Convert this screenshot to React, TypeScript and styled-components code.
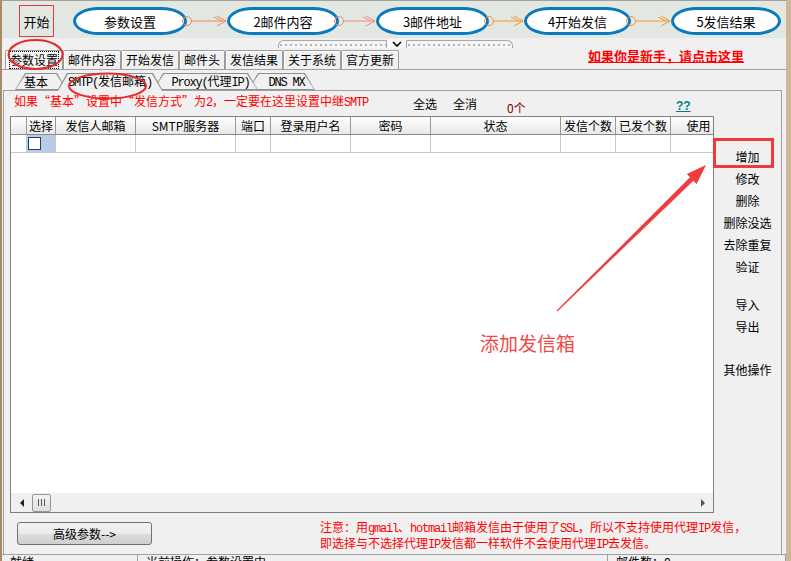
import React from "react";
import styled, { createGlobalStyle } from "styled-components";

const cjk = `"Noto Sans CJK SC", "Noto Sans", sans-serif`;

const GlobalStyle = createGlobalStyle`
  html, body { margin: 0; padding: 0; }
  body {
    background: #cdb796;
    font-family: ${cjk};
    font-size: 12px;
    color: #000;
    overflow: hidden;
  }
`;

const Window = styled.div`
  position: relative;
  width: 784px;
  height: 575px;
  border-left: 2px solid #a88a68;
  background: #f0f0f0;
  display: flex;
  flex-direction: column;
  overflow: hidden;
  font-family: ${cjk};
  font-size: 12px;
`;

/* ---------- flow strip ---------- */
const FlowStrip = styled.div`
  height: 37px;
  flex-shrink: 0;
  border-top: 1px solid #a0a0a0;
  background: #e2e7e2;
  display: flex;
  align-items: flex-start;
  padding-left: 17px;
`;

const StartBox = styled.div`
  margin-top: 4px;
  width: 35px;
  height: 32px;
  box-sizing: border-box;
  border: 1px solid #e23c3c;
  display: flex;
  align-items: center;
  justify-content: center;
  font-size: 13px;
  margin-right: 19px;
`;

const Step = styled.div<{ $w: number }>`
  margin-top: 6px;
  width: ${(p) => p.$w}px;
  height: 28px;
  box-sizing: border-box;
  border: 3px solid #0a79be;
  border-radius: 26px / 14px;
  background: #fff;
  display: flex;
  align-items: center;
  justify-content: center;
  font-size: 13px;
`;

const ConnectorBox = styled.div<{ $w: number }>`
  position: relative;
  z-index: 1;
  margin-top: 6px;
  width: ${(p) => p.$w}px;
  height: 28px;
  svg { display: block; overflow: visible; }
`;

const Connector = ({ w, color }: { w: number; color: string }) => (
  <ConnectorBox $w={w}>
    <svg width={w} height={28}>
      <circle cx={0} cy={14} r={4.5} fill="none" stroke={color} strokeWidth={1} />
      <line x1={4.5} y1={14} x2={w - 1} y2={14} stroke={color} strokeWidth={1} />
      <polyline points={`${w - 10},9 ${w - 1},14 ${w - 10},19`} fill="none" stroke={color} strokeWidth={1} />
      <polyline points={`${w - 13},10 ${w - 5},14`} fill="none" stroke={color} strokeWidth={1} />
    </svg>
  </ConnectorBox>
);

/* ---------- splitter ---------- */
const SplitterRow = styled.div`
  height: 10px;
  flex-shrink: 0;
  display: flex;
  align-items: flex-end;
  padding-left: 276px;
`;

const GripHalf = styled.div<{ $w: number; $side: "l" | "r" }>`
  width: ${(p) => p.$w}px;
  height: 8px;
  box-sizing: border-box;
  border: 1px solid #a8a8a8;
  border-bottom: none;
  border-radius: ${(p) => (p.$side === "l" ? "6px 1px 0 0" : "1px 6px 0 0")};
  background-color: #f6f6f6;
  background-image: linear-gradient(90deg, #b4b4b4 0 2px, transparent 2px);
  background-size: 5px 2px;
  background-repeat: repeat-x;
  background-position: 6px 3px;
`;

const GripToggle = styled.div`
  width: 19px;
  height: 9px;
  display: flex;
  align-items: center;
  justify-content: center;
  background: #f8f8f8;
`;

/* ---------- main tabs ---------- */
const MainTabsRow = styled.div`
  height: 21px;
  flex-shrink: 0;
  display: flex;
  align-items: flex-end;
  padding-left: 3px;
  border-bottom: 1px solid #a0a0a0;
`;

const MainTab = styled.div<{ $active?: boolean }>`
  height: 19px;
  box-sizing: border-box;
  padding: 0 4px;
  border: 1px solid #9c9c9c;
  border-bottom: none;
  border-radius: 2px 2px 0 0;
  background: ${(p) => (p.$active ? "#f7f7f7" : "#f0f0f0")};
  box-shadow: inset 1px 1px 0 #ffffff;
  display: flex;
  align-items: center;
  line-height: 16px;
  white-space: nowrap;
  span {
    outline: ${(p) => (p.$active ? "1px dotted #000" : "none")};
  }
`;

const NewbieLink = styled.a`
  margin-left: auto;
  margin-right: 42px;
  align-self: flex-start;
  margin-top: 1px;
  color: #ff0000;
  font-weight: bold;
  font-size: 13px;
  line-height: 14px;
  text-decoration: underline;
`;

/* ---------- page ---------- */
const MainPage = styled.div`
  flex: 1;
  display: flex;
  flex-direction: column;
  padding: 0 4px 0 1px;
  min-height: 0;
`;

const SubTabsRow = styled.div`
  height: 20px;
  flex-shrink: 0;
  display: flex;
  align-items: flex-end;
  padding-left: 12px;
  box-sizing: border-box;
`;

const SubTab = styled.div<{ $w: number; $z: number; $active?: boolean; $side: "l" | "r" | "c" }>`
  position: relative;
  z-index: ${(p) => p.$z};
  width: ${(p) => p.$w}px;
  height: ${(p) => (p.$active ? 18 : 17)}px;
  margin-bottom: ${(p) => (p.$active ? -1 : 0)}px;
  margin-left: -10px;
  &:first-child { margin-left: 0; }
  box-sizing: border-box;
  padding: ${(p) => (p.$side === "l" ? "0 10px 0 0" : p.$side === "r" ? "0 0 0 10px" : "0")};
  display: flex;
  align-items: center;
  justify-content: center;
  white-space: nowrap;
  line-height: 14px;
  &::before,
  &::after {
    content: "";
    position: absolute;
    clip-path: polygon(0 100%, 10px 0, calc(100% - 10px) 0, 100% 100%);
  }
  &::before { inset: 0; background: #8e8e8e; }
  &::after { inset: 1px 1px ${(p) => (p.$active ? 0 : 1)}px 1px; background: #f0f0f0; }
  & > span { position: relative; z-index: 1; padding-bottom: ${(p) => (p.$active ? 1 : 0)}px; }
`;

const Mono = styled.span`
  font-family: "Liberation Mono", monospace;
  font-size: 12px;
  letter-spacing: -1.2px;
`;

const SubPanel = styled.div`
  flex: 1;
  box-sizing: border-box;
  border: 1px solid #a0a0a0;
  display: flex;
  flex-direction: column;
  padding-left: 6px;
`;

const InfoRow = styled.div`
  height: 25px;
  flex-shrink: 0;
  display: flex;
  align-items: flex-start;
  line-height: 14px;
  white-space: nowrap;
`;

const InfoItem = styled.div<{ $w?: number; $top: number; $color?: string; $indent?: number }>`
  width: ${(p) => (p.$w ? `${p.$w}px` : "auto")};
  box-sizing: border-box;
  padding-left: ${(p) => p.$indent || 0}px;
  margin-top: ${(p) => p.$top}px;
  color: ${(p) => p.$color || "#000"};
`;

const HelpLink = styled.a`
  margin-top: 8px;
  color: #008080;
  font-family: "Liberation Sans", sans-serif;
  font-weight: bold;
  font-size: 12px;
  text-decoration: underline;
`;

const GridArea = styled.div`
  height: 397px;
  flex-shrink: 0;
  display: flex;
`;

const cols = "16px 29px 80px 100px 35px 80px 80px 130px 55px 55px 56px";

const Grid = styled.div`
  width: 704px;
  height: 397px;
  box-sizing: border-box;
  border: 1px solid #7f7f7f;
  background: #fff;
  display: flex;
  flex-direction: column;
  overflow: hidden;
`;

const HeaderRow = styled.div`
  display: grid;
  grid-template-columns: ${cols};
  height: 18px;
  flex-shrink: 0;
  box-sizing: border-box;
  border-bottom: 1px solid #8a8a8a;
  background: linear-gradient(#ffffff, #f3f3f3 50%, #e8e8e8);
`;

const HeadCell = styled.div`
  border-right: 1px solid #9a9a9a;
  display: flex;
  align-items: center;
  justify-content: center;
  line-height: 16px;
  white-space: nowrap;
  overflow: hidden;
`;

const DataRow = styled.div`
  display: grid;
  grid-template-columns: ${cols};
  height: 18px;
  flex-shrink: 0;
  box-sizing: border-box;
  border-bottom: 1px solid #c8c8c8;
`;

const DataCell = styled.div<{ $selected?: boolean }>`
  border-right: 1px solid #c8c8c8;
  background: ${(p) => (p.$selected ? "#b8cbe7" : "#fff")};
  display: flex;
  align-items: center;
  padding-left: 1px;
`;

const Check = styled.div`
  width: 13px;
  height: 13px;
  box-sizing: border-box;
  border: 1px solid #1e3f6f;
  background: #fff;
`;

const GridBody = styled.div`
  flex: 1;
  background: #fff;
`;

const HScroll = styled.div`
  height: 19px;
  flex-shrink: 0;
  display: flex;
  align-items: center;
  background: #f0f0f0;
`;

const ScrollArrow = styled.div<{ $dir: "l" | "r" }>`
  width: 21px;
  height: 19px;
  display: flex;
  align-items: center;
  justify-content: center;
  &::before {
    content: "";
    border-top: 4px solid transparent;
    border-bottom: 4px solid transparent;
    ${(p) => (p.$dir === "l" ? "border-right: 4px solid #222;" : "border-left: 4px solid #555;")}
  }
`;

const Thumb = styled.div`
  width: 19px;
  height: 18px;
  box-sizing: border-box;
  border: 1px solid #979797;
  border-radius: 2px;
  background: linear-gradient(#f4f4f4, #dedede);
  display: flex;
  align-items: center;
  justify-content: center;
  gap: 2px;
  span {
    width: 1px;
    height: 7px;
    background: #555;
  }
`;

const ScrollTrack = styled.div`
  flex: 1;
`;

const SideButtons = styled.div`
  width: 67px;
  display: flex;
  flex-direction: column;
  padding-top: 29px;
`;

const SideButton = styled.div`
  height: 22px;
  display: flex;
  align-items: center;
  justify-content: center;
  white-space: nowrap;
`;

const Gap = styled.div<{ $h: number }>`
  height: ${(p) => p.$h}px;
`;

const BottomRow = styled.div`
  height: 41px;
  flex-shrink: 0;
  display: flex;
  align-items: flex-start;
`;

const AdvButton = styled.button`
  margin: 9px 0 0 7px;
  width: 135px;
  height: 23px;
  box-sizing: border-box;
  border: 1px solid #707070;
  border-radius: 3px;
  background: linear-gradient(#f2f2f2, #ebebeb 50%, #dddddd 51%, #cfcfcf);
  font-family: ${cjk};
  font-size: 12px;
  color: #000;
  padding: 0;
`;

const Notice = styled.div`
  margin: 7px 0 0 168px;
  color: #ff0000;
  line-height: 13px;
  white-space: nowrap;
`;

/* ---------- status bar ---------- */
const StatusBar = styled.div`
  height: 20px;
  flex-shrink: 0;
  border-top: 1px solid #a0a0a0;
  display: flex;
  line-height: 14px;
`;

const StatusPanel = styled.div<{ $w?: number }>`
  width: ${(p) => (p.$w ? `${p.$w}px` : "auto")};
  flex: ${(p) => (p.$w ? "none" : "1")};
  border-right: 1px solid #a0a0a0;
  padding-left: 8px;
  box-sizing: border-box;
  white-space: nowrap;
`;

/* ---------- annotations ---------- */
const Overlay = styled.div`
  position: absolute;
  top: 0;
  left: -2px;
  width: 791px;
  height: 561px;
  pointer-events: none;
  z-index: 20;
  svg { position: absolute; inset: 0; }
`;

const CalloutText = styled.div`
  position: absolute;
  left: 480px;
  top: 332px;
  font-size: 19px;
  line-height: 22px;
  color: #f24848;
  white-space: nowrap;
`;

const steps = [
  { label: "参数设置", w: 114 },
  { label: "2邮件内容", w: 112 },
  { label: "3邮件地址", w: 113 },
  { label: "4开始发信", w: 107 },
  { label: "5发信结果", w: 110 },
];
const links = [
  { w: 40, color: "#f08a5a" },
  { w: 37, color: "#f28a8a" },
  { w: 35, color: "#f39a2a" },
  { w: 40, color: "#f39a2a" },
];

const mainTabs = ["参数设置", "邮件内容", "开始发信", "邮件头", "发信结果", "关于系统", "官方更新"];
const headers = ["", "选择", "发信人邮箱", "SMTP服务器", "端口", "登录用户名", "密码", "状态", "发信个数", "已发个数", "使用"];

export default function App() {
  return (
    <>
      <GlobalStyle />
      <Window lang="zh-CN">
        <FlowStrip>
          <StartBox>开始</StartBox>
          {steps.map((s, i) => (
            <React.Fragment key={s.label}>
              <Step $w={s.w}>{s.label}</Step>
              {links[i] && <Connector w={links[i].w} color={links[i].color} />}
            </React.Fragment>
          ))}
        </FlowStrip>

        <SplitterRow>
          <GripHalf $w={109} $side="l" />
          <GripToggle>
            <svg width="10" height="6" viewBox="0 0 10 6">
              <polyline points="1,1 5,5 9,1" fill="none" stroke="#000" strokeWidth="1.6" />
            </svg>
          </GripToggle>
          <GripHalf $w={107} $side="r" />
        </SplitterRow>

        <MainTabsRow>
          {mainTabs.map((t, i) => (
            <MainTab key={t} $active={i === 0}>
              <span>{t}</span>
            </MainTab>
          ))}
          <NewbieLink>如果你是新手，请点击这里</NewbieLink>
        </MainTabsRow>

        <MainPage>
          <SubTabsRow>
            <SubTab $w={52} $z={1} $side="l">
              <span>基本</span>
            </SubTab>
            <SubTab $w={106} $z={4} $side="c" $active>
              <span>
                <Mono>SMTP(</Mono>发信邮箱<Mono>)</Mono>
              </span>
            </SubTab>
            <SubTab $w={105} $z={3} $side="r">
              <span>
                <Mono>Proxy(</Mono>代理<Mono>IP)</Mono>
              </span>
            </SubTab>
            <SubTab $w={67} $z={2} $side="r">
              <span>
                <Mono>DNS MX</Mono>
              </span>
            </SubTab>
          </SubTabsRow>

          <SubPanel>
            <InfoRow>
              <InfoItem $w={403} $top={3} $color="#ff0000" $indent={4}>
                如果“基本”设置中“发信方式”为<Mono>2</Mono>，一定要在这里设置中继<Mono>SMTP</Mono>
              </InfoItem>
              <InfoItem $w={40} $top={6}>全选</InfoItem>
              <InfoItem $w={54} $top={6}>全消</InfoItem>
              <InfoItem $w={169} $top={10} $color="#800000">0个</InfoItem>
              <HelpLink>??</HelpLink>
            </InfoRow>

            <GridArea>
              <Grid>
                <HeaderRow>
                  {headers.map((h, i) => (
                    <HeadCell key={i}>{h}</HeadCell>
                  ))}
                </HeaderRow>
                <DataRow>
                  {headers.map((_, i) => (
                    <DataCell key={i} $selected={i === 1}>
                      {i === 1 && <Check />}
                    </DataCell>
                  ))}
                </DataRow>
                <GridBody />
                <HScroll>
                  <ScrollArrow $dir="l" />
                  <Thumb>
                    <span />
                    <span />
                    <span />
                  </Thumb>
                  <ScrollTrack />
                  <ScrollArrow $dir="r" />
                </HScroll>
              </Grid>

              <SideButtons>
                <SideButton>增加</SideButton>
                <SideButton>修改</SideButton>
                <SideButton>删除</SideButton>
                <SideButton>删除没选</SideButton>
                <SideButton>去除重复</SideButton>
                <SideButton>验证</SideButton>
                <Gap $h={16} />
                <SideButton>导入</SideButton>
                <SideButton>导出</SideButton>
                <Gap $h={21} />
                <SideButton>其他操作</SideButton>
              </SideButtons>
            </GridArea>

            <BottomRow>
              <AdvButton>高级参数--&gt;</AdvButton>
              <Notice>
                注意：用<Mono>gmail</Mono>、<Mono>hotmail</Mono>邮箱发信由于使用了<Mono>SSL</Mono>，所以不支持使用代理<Mono>IP</Mono>发信，
                <br />
                即选择与不选择代理<Mono>IP</Mono>发信都一样软件不会使用代理<Mono>IP</Mono>去发信。
              </Notice>
            </BottomRow>
          </SubPanel>
        </MainPage>

        <StatusBar>
          <StatusPanel $w={136}>就绪</StatusPanel>
          <StatusPanel $w={470}>当前操作：参数设置中</StatusPanel>
          <StatusPanel>邮件数：0</StatusPanel>
        </StatusBar>

        <Overlay>
          <svg width="791" height="561">
            <ellipse cx="35.5" cy="54.5" rx="27" ry="14.5" fill="none" stroke="#e52b2b" strokeWidth="2" />
            <ellipse cx="107.5" cy="86" rx="38.5" ry="12.5" fill="none" stroke="#e52b2b" strokeWidth="2" />
            <rect x="714.5" y="139.5" width="58" height="27" fill="none" stroke="#f03a3a" strokeWidth="3" />
            <polygon
              points="556.6,310.6 690,177.2 686.8,174 706,165 696.6,184 693.4,180.8 557.4,311.4"
              fill="#f03c3c"
            />
          </svg>
          <CalloutText>添加发信箱</CalloutText>
        </Overlay>
      </Window>
    </>
  );
}
